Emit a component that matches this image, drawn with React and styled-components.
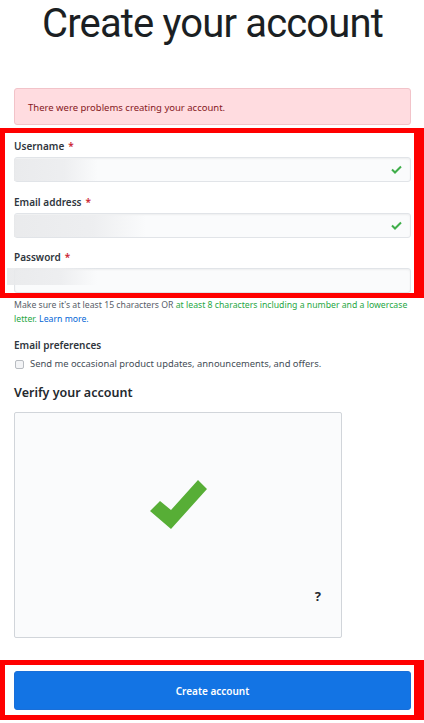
import React from "react";
import styled, { createGlobalStyle } from "styled-components";

const GlobalStyle = createGlobalStyle`
  html, body {
    margin: 0;
    padding: 0;
    background: #ffffff;
  }
  body {
    font-family: "Noto Sans", "Liberation Sans", sans-serif;
    color: #24292e;
    overflow: hidden;
  }
`;

const Page = styled.div`
  width: 424px;
  height: 723px;
  box-sizing: border-box;
  padding: 0 13px 0 14px;
  display: flex;
  flex-direction: column;
`;

const Title = styled.h1`
  margin: 0;
  padding-top: 2px;
  height: 48px;
  font-family: Roboto, "Liberation Sans", sans-serif;
  font-weight: 400;
  font-size: 40px;
  line-height: 44px;
  letter-spacing: -0.85px;
  text-align: center;
  color: #1b1f23;
`;

const Alert = styled.div`
  margin-top: 38px;
  height: 37px;
  box-sizing: border-box;
  display: flex;
  align-items: center;
  padding: 2px 13px 0;
  background: #ffdce0;
  border: 1px solid #f2c3c9;
  border-radius: 3px;
  font-size: 9.5px;
  color: #86181d;
`;

const Highlight = styled.div`
  margin: ${(p) => p.$top}px -13px 0 -14px;
  border: 5px solid #ff0000;
  border-right-width: 10px;
  padding: ${(p) => p.$pad};
  display: flex;
  flex-direction: column;
`;

const Field = styled.div`
  display: flex;
  flex-direction: column;
  & + & {
    margin-top: 12.5px;
  }
`;

const Label = styled.label`
  font-size: 10px;
  font-weight: 600;
  line-height: 14px;
  color: #2f363d;
  margin-bottom: 4px;
`;

const Required = styled.span`
  color: #cb2431;
  margin-left: 4px;
`;

const InputBox = styled.div`
  position: relative;
  height: 25px;
  box-sizing: border-box;
  border: 1px solid #e1e4e8;
  border-radius: 3px;
  background: #fafbfc;
  box-shadow: inset 0 1px 2px rgba(27, 31, 35, 0.06);
  display: flex;
  align-items: center;
  justify-content: flex-end;
  padding-right: 8px;
`;

const Redacted = styled.div`
  position: absolute;
  left: ${(p) => p.$left}px;
  top: ${(p) => p.$top}px;
  height: ${(p) => p.$h}px;
  width: ${(p) => p.$w}px;
  background: linear-gradient(
    90deg,
    rgba(232, 233, 235, 0.9) 0%,
    rgba(236, 237, 239, 0.9) 60%,
    rgba(250, 251, 252, 0) 100%
  );
`;

const Hint = styled.p`
  margin: 0;
  font-size: 8.7px;
  line-height: 14px;
  color: #586069;
`;

const Green = styled.span`
  color: #28a745;
`;

const Link = styled.a`
  color: #0366d6;
  text-decoration: none;
`;

const SectionLabel = styled.div`
  margin-top: 12px;
  font-size: 10px;
  font-weight: 600;
  line-height: 14px;
  color: #2f363d;
`;

const CheckRow = styled.label`
  margin-top: 5px;
  display: flex;
  align-items: center;
  gap: 6px;
  font-size: 9.4px;
  line-height: 14px;
  color: #444d56;
`;

const Box = styled.span`
  width: 7px;
  height: 7px;
  margin-left: 1px;
  border: 1px solid #b8bcc1;
  border-radius: 2px;
  background: #f3f4f6;
`;

const Heading = styled.h2`
  margin: 14px 0 0;
  font-size: 12.5px;
  font-weight: 600;
  line-height: 16px;
  color: #24292e;
`;

const Captcha = styled.div`
  position: relative;
  margin-top: 11px;
  width: 328px;
  height: 226px;
  box-sizing: border-box;
  border: 1px solid #d1d5da;
  border-radius: 2px;
  background: #fafbfc;
  display: flex;
  align-items: center;
  justify-content: center;
`;

const BigCheck = styled.svg`
  margin-bottom: 40px;
`;

const Help = styled.span`
  position: absolute;
  right: 20px;
  bottom: 32px;
  font-size: 13px;
  font-weight: 700;
  color: #24292e;
`;

const Button = styled.button`
  height: 39px;
  border: 1px solid #1a6fd8;
  border-radius: 3px;
  background: #1374e4;
  color: #ffffff;
  font-family: "Noto Sans", "Liberation Sans", sans-serif;
  font-size: 10px;
  font-weight: 600;
  cursor: pointer;
`;

const InputCheck = () => (
  <svg width="11" height="9" viewBox="0 0 11 9">
    <polyline points="1,4.5 4,7.5 10,1.5" fill="none" stroke="#3fae4a" strokeWidth="2" />
  </svg>
);

const fields = [
  { label: "Username", valid: true, blur: { left: -1, top: 1, h: 22, w: 84 } },
  { label: "Email address", valid: true, blur: { left: -1, top: 1, h: 22, w: 132 } },
  { label: "Password", valid: false, blur: { left: -8, top: -1, h: 17, w: 90 } },
];

const App = () => {
  return (
    <Page>
      <GlobalStyle />
      <Title>Create your account</Title>
      <Alert>There were problems creating your account.</Alert>

      <Highlight $top={3} $pad="6px 3px 0 9px">
        {fields.map((f) => (
          <Field key={f.label}>
            <Label>
              {f.label}
              <Required>*</Required>
            </Label>
            <InputBox>
              <Redacted $left={f.blur.left} $top={f.blur.top} $h={f.blur.h} $w={f.blur.w} />
              {f.valid && <InputCheck />}
            </InputBox>
          </Field>
        ))}
      </Highlight>

      <Hint>
        Make sure it's at least 15 characters OR{" "}
        <Green>at least 8 characters including a number and a lowercase</Green>{" "}
        <Green>letter.</Green> <Link href="#">Learn more.</Link>
      </Hint>

      <SectionLabel>Email preferences</SectionLabel>
      <CheckRow>
        <Box />
        Send me occasional product updates, announcements, and offers.
      </CheckRow>

      <Heading>Verify your account</Heading>
      <Captcha>
        <BigCheck width="58" height="50" viewBox="0 0 58 50">
          <polygon points="1,31 11,21 22,30 49,0 58,9 22,49" fill="#57ae36" />
        </BigCheck>
        <Help>?</Help>
      </Captcha>

      <Highlight $top={22} $pad="6px 3px 5px 9px">
        <Button>Create account</Button>
      </Highlight>
    </Page>
  );
};

export default App;
